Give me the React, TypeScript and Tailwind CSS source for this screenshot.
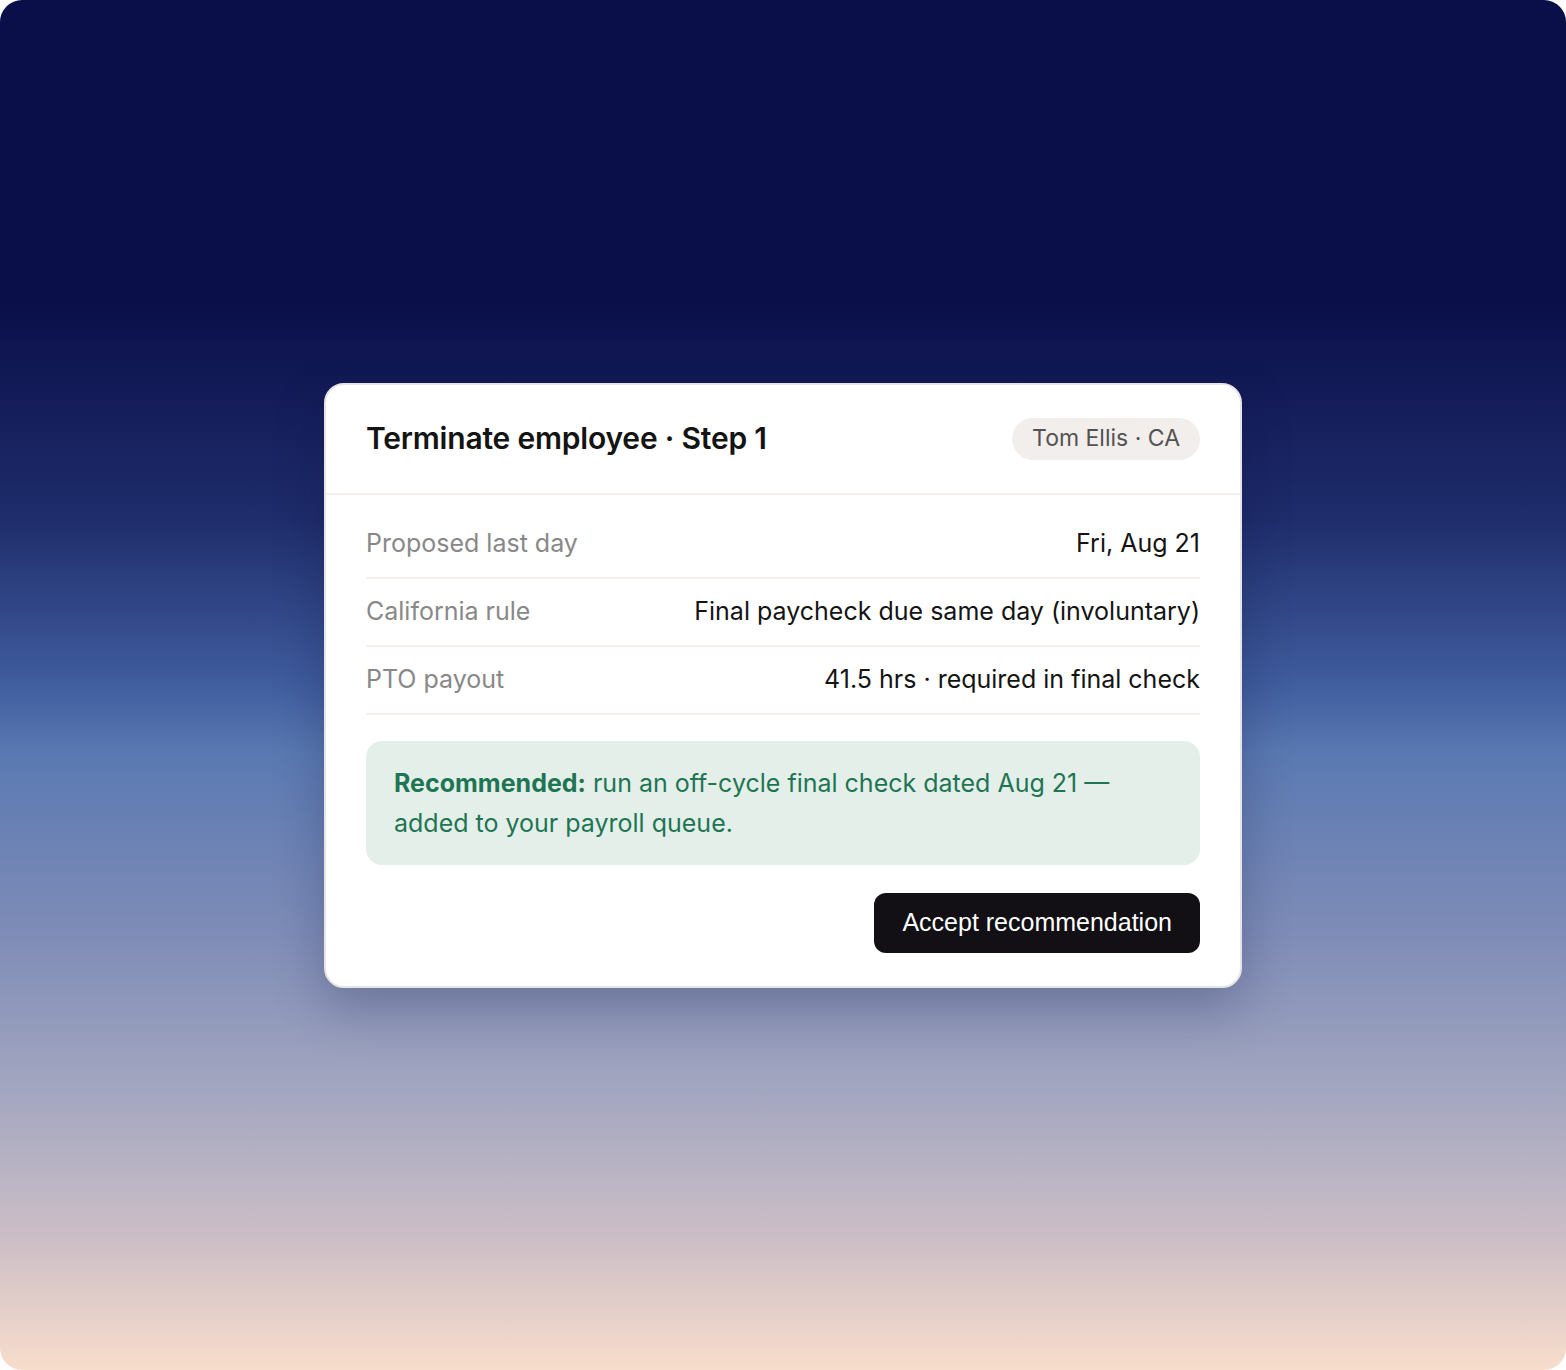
import React from "react";

const rows = [
  { label: "Proposed last day", value: "Fri, Aug 21" },
  { label: "California rule", value: "Final paycheck due same day (involuntary)" },
  { label: "PTO payout", value: "41.5 hrs · required in final check" },
];

export default function App() {
  return (
    <div className="w-[1566px] h-[1370px] bg-white">
      <div
        className="w-full h-full rounded-[22px] overflow-hidden flex items-center justify-center bg-[linear-gradient(180deg,#0a0f49_0%,#0a0f49_22%,#1f2d6c_38%,#405d9e_50%,#5a79b2_55%,#7e8cb7_68%,#a4a7c0_80%,#cbbdc6_90%,#f7ddcb_100%)]"
        style={{ fontFamily: "Inter, 'Noto Sans', sans-serif" }}
      >
        <div className="w-[918px] bg-white rounded-[20px] border-2 border-[#e6e4e4] shadow-[0_20px_50px_rgba(10,15,60,0.25)]">
          <div className="h-[110px] px-[40px] flex items-center justify-between border-b-2 border-[#f3eeec]">
            <div className="text-[30px] font-semibold text-[#141414] tracking-[-0.2px]">
              Terminate employee · Step 1
            </div>
            <div className="h-[42px] px-[20px] rounded-full bg-[#f1eeec] text-[#555251] text-[23px] flex items-center">
              Tom Ellis · CA
            </div>
          </div>
          <div className="px-[40px] pt-[16px] pb-[33px]">
            {rows.map((r) => (
              <div
                key={r.label}
                className="h-[68px] flex items-center justify-between border-b-2 border-[#f3eeec] text-[25px]"
              >
                <span className="text-[#888888]">{r.label}</span>
                <span className="text-[#141414]">{r.value}</span>
              </div>
            ))}
            <div className="mt-[26px] bg-[#e5efe9] rounded-[16px] px-[28px] py-[22px] text-[25px] leading-[40px] text-[#1e7553]">
              <span className="font-bold">Recommended:</span> run an off-cycle final check dated Aug 21 —
              <br />
              added to your payroll queue.
            </div>
            <div className="mt-[28px] flex justify-end">
              <button
                className="h-[60px] px-[28px] rounded-[12px] bg-[#121014] text-white text-[25px]"
                style={{ fontFamily: "'Liberation Sans', Arial, sans-serif" }}
              >
                Accept recommendation
              </button>
            </div>
          </div>
        </div>
      </div>
    </div>
  );
}
